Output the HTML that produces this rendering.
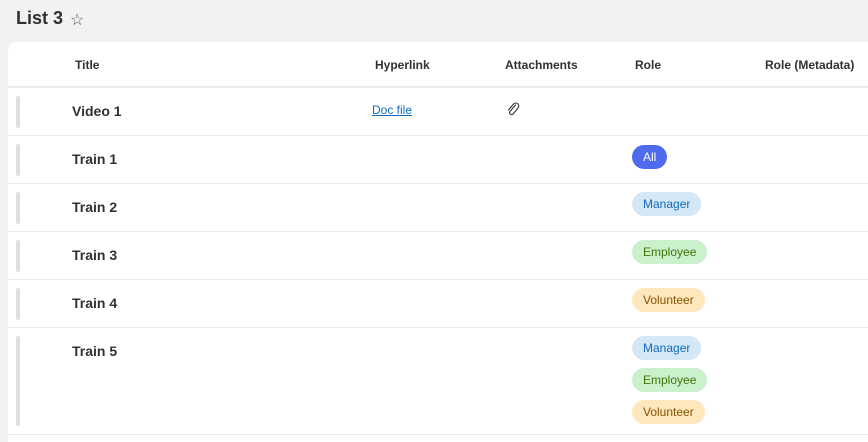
<!DOCTYPE html>
<html><head><style>
*{margin:0;padding:0;box-sizing:border-box}
body{width:868px;height:437px;background:#f3f2f1;font-family:"Liberation Sans",sans-serif;color:#323130;position:relative;overflow:hidden}
.h1{position:absolute;left:16px;top:8px;font-size:18px;font-weight:600;color:#323130}
.star{position:absolute;left:70px;top:10px;font-size:16px;color:#605e5c}
.card{position:absolute;left:8px;top:42px;width:870px;height:400px;background:#fff;border-radius:8px 0 0 0}
.hd{position:absolute;top:16px;font-size:12px;font-weight:bold;color:#323130}
.hl{position:absolute;left:0;right:0;top:44px;height:2px;background:#edebe9}
.row{position:absolute;left:0;right:0;border-bottom:1px solid #edebe9}
.bar{position:absolute;left:8px;top:8px;width:4px;background:#e1dfdd;border-radius:2px}
.t{position:absolute;left:64px;top:15px;font-size:14px;font-weight:bold;color:#323130}
.pill{position:absolute;left:624px;height:24px;border-radius:12px;font-size:12px;line-height:24px;padding:0 11px}
.m{background:#d4e7f6;color:#0f6cbd}
.e{background:#caf0cc;color:#437406}
.v{background:#fee7bc;color:#8a5200}
.a{background:#4f6bed;color:#fff}
</style></head><body>
<div class="h1">List 3</div><div class="star">☆</div>
<div class="card">
<div class="hd" style="left:67px">Title</div>
<div class="hd" style="left:367px">Hyperlink</div>
<div class="hd" style="left:497px">Attachments</div>
<div class="hd" style="left:627px">Role</div>
<div class="hd" style="left:757px">Role (Metadata)</div>
<div class="hl"></div>
<div class="row" style="top:46px;height:48px"><div class="bar" style="height:32px"></div><div class="t">Video 1</div>
<a style="position:absolute;left:364px;top:15px;font-size:12px;color:#0f6cbd;text-decoration:underline">Doc file</a>
<svg style="position:absolute;left:498px;top:13px" width="14" height="16" viewBox="0 0 14 16"><path d="M9.5 4 L4 10.5 a2 2 0 0 0 3 2.6 L12 7 a3 3 0 0 0 -4.5 -4 L2.5 9" fill="none" stroke="#323130" stroke-width="1.1" stroke-linecap="round"/></svg>
</div>
<div class="row" style="top:94px;height:48px"><div class="bar" style="height:32px"></div><div class="t">Train 1</div><div class="pill a" style="top:9px">All</div></div>
<div class="row" style="top:142px;height:48px"><div class="bar" style="height:32px"></div><div class="t">Train 2</div><div class="pill m" style="top:8px">Manager</div></div>
<div class="row" style="top:190px;height:48px"><div class="bar" style="height:32px"></div><div class="t">Train 3</div><div class="pill e" style="top:8px">Employee</div></div>
<div class="row" style="top:238px;height:48px"><div class="bar" style="height:32px"></div><div class="t">Train 4</div><div class="pill v" style="top:8px">Volunteer</div></div>
<div class="row" style="top:286px;height:107px"><div class="bar" style="height:90px"></div><div class="t">Train 5</div>
<div class="pill m" style="top:8px">Manager</div>
<div class="pill e" style="top:40px">Employee</div>
<div class="pill v" style="top:72px">Volunteer</div></div>
</div>
</body></html>
